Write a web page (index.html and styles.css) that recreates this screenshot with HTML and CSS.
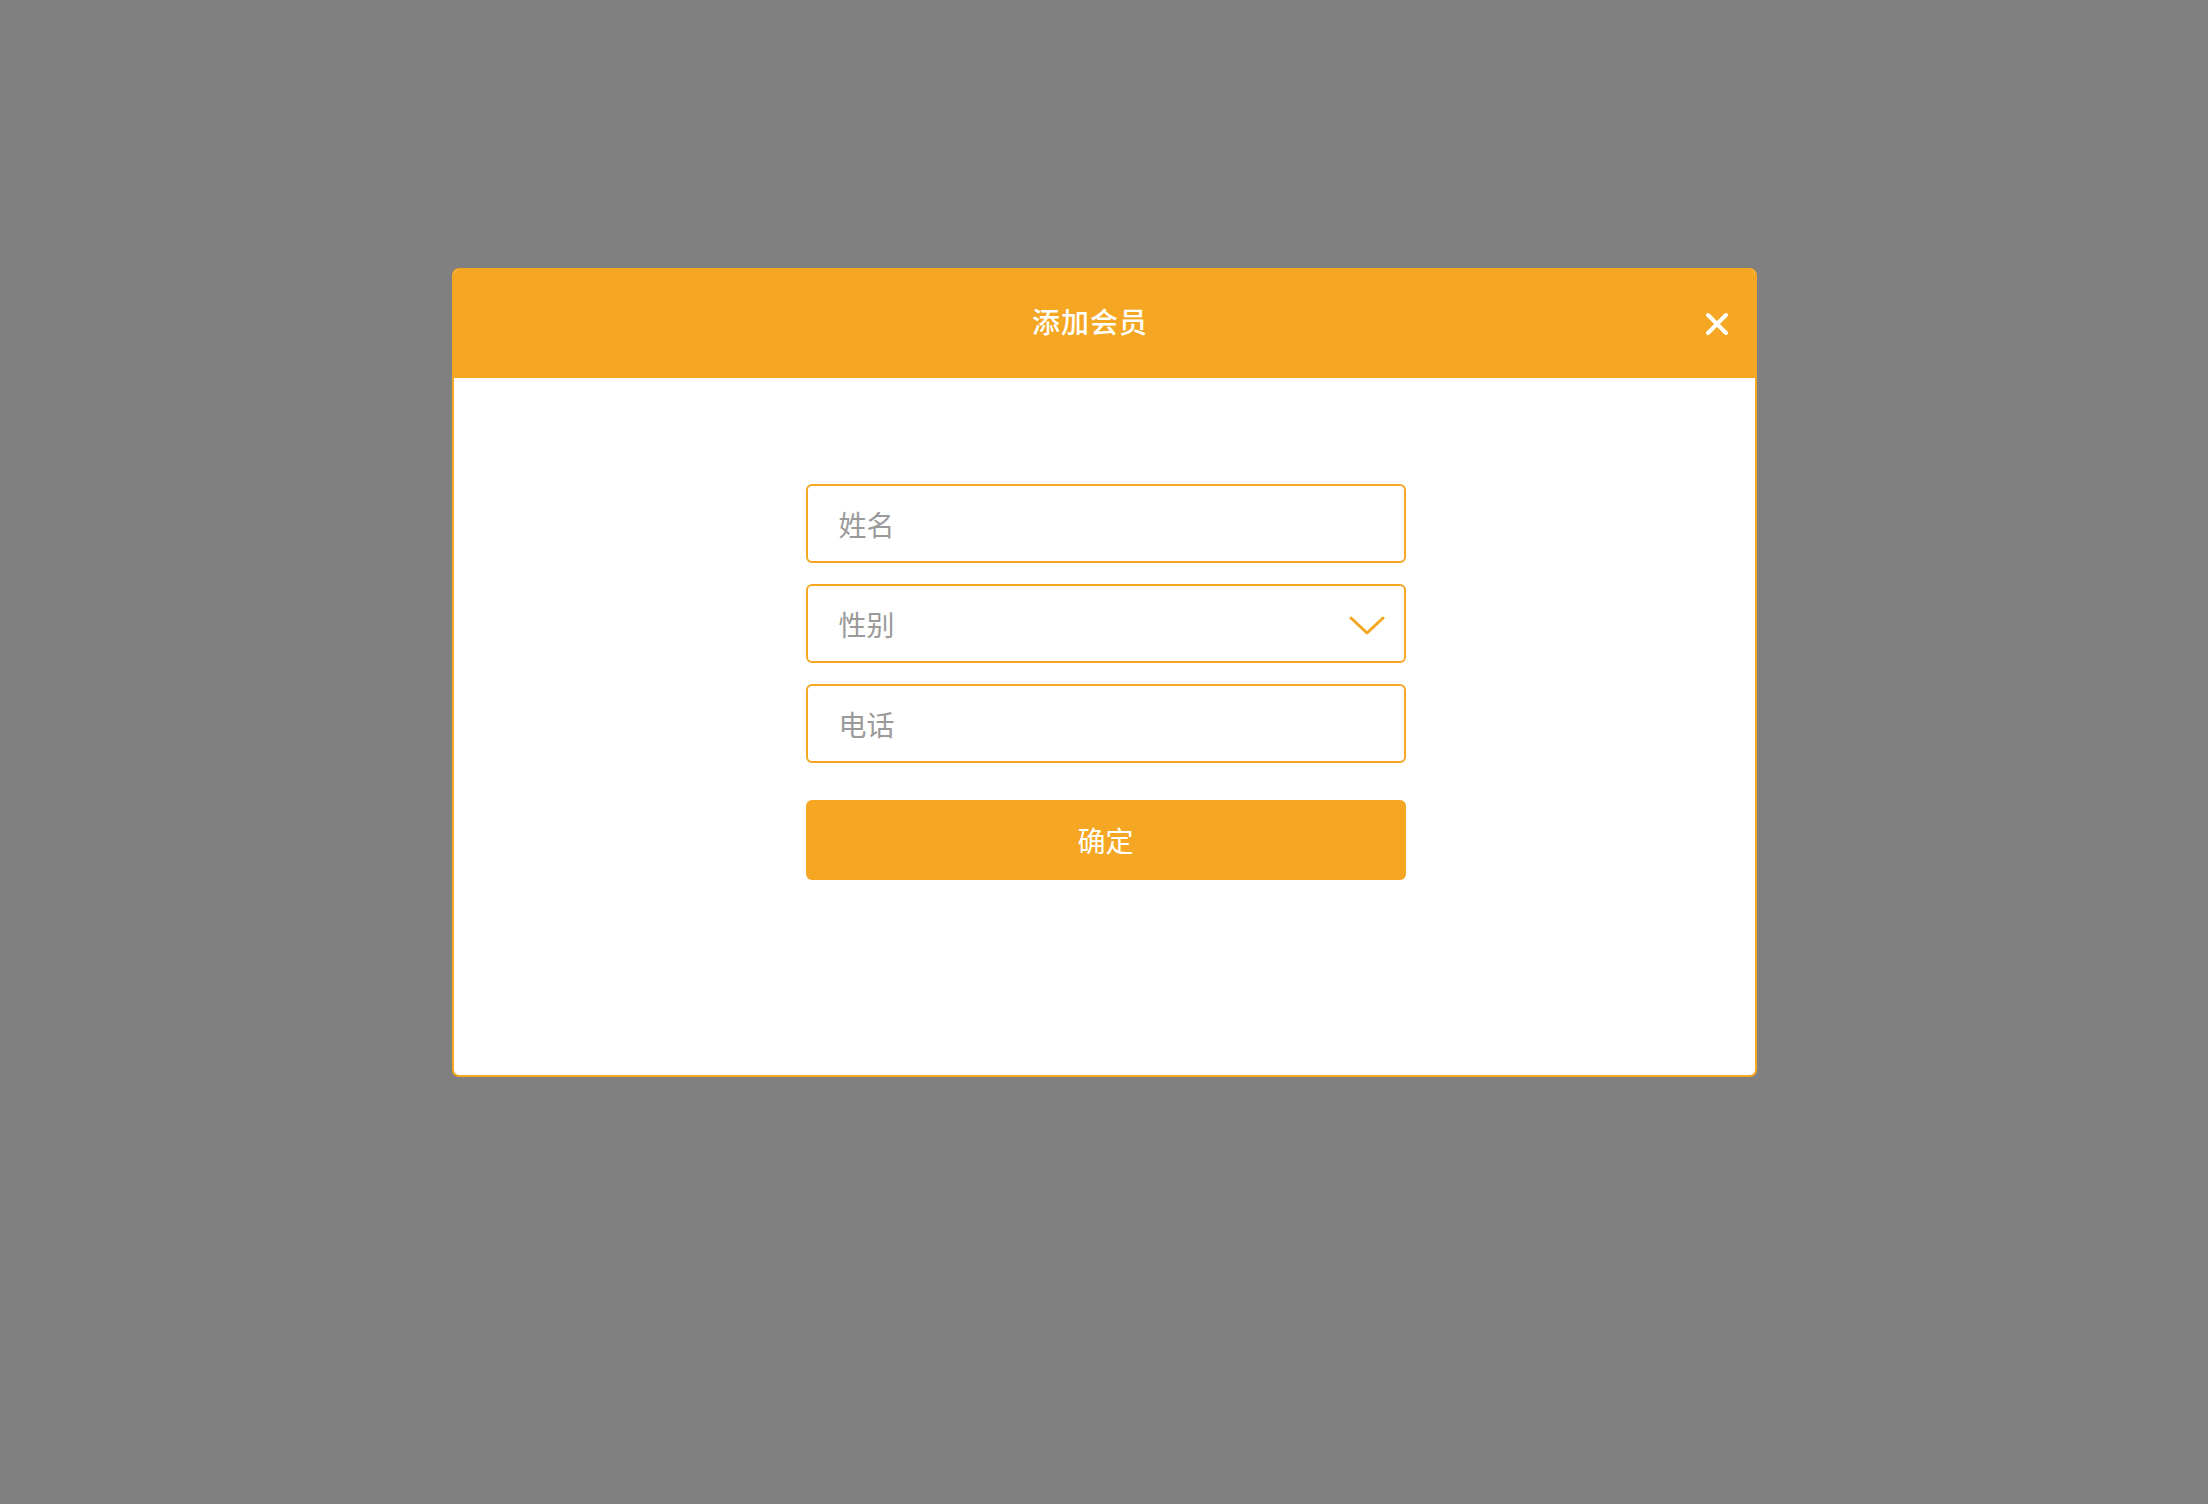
FILE: index.html
```html
<!DOCTYPE html>
<html lang="zh-CN">
<head>
    <meta charset="UTF-8">
    <meta name="viewport" content="width=device-width, initial-scale=1.0">
    <title>添加会员</title>
    <link rel="stylesheet" href="styles.css">
</head>
<body>
    <div class="modal">
        <div class="modal-header">
            <div class="modal-title">添加会员</div>
            <button type="button" class="modal-close" aria-label="关闭">
                <svg width="24" height="24" viewBox="0 0 24 24">
                    <path d="M3 3 L21 21 M21 3 L3 21" stroke="#fff" stroke-width="4" stroke-linecap="round" fill="none"/>
                </svg>
            </button>
        </div>
        <div class="modal-body">
            <form class="member-form">
                <input type="text" class="field" placeholder="姓名">
                <div class="field select-field">
                    <span class="placeholder">性别</span>
                    <svg class="chevron" width="36" height="20" viewBox="0 0 36 20">
                        <path d="M2 2 L18 17 L34 2" stroke="#f5a623" stroke-width="3" stroke-linecap="round" stroke-linejoin="round" fill="none"/>
                    </svg>
                </div>
                <input type="text" class="field" placeholder="电话">
                <button type="button" class="submit">确定</button>
            </form>
        </div>
    </div>
</body>
</html>
```

FILE: styles.css
```css
body {
    margin: 0;
    background-color: #808080;
    font-family: "Noto Sans CJK SC", "Noto Sans", sans-serif;
}

.modal {
    width: 1301px;
    margin: 268px auto 0;
    background-color: #fff;
    border: 2px solid #f5a623;
    border-radius: 7px;
    overflow: hidden;
}

.modal-header {
    position: relative;
    height: 110px;
    margin: -2px -2px 0;
    padding-right: 28px;
    padding-bottom: 4px;
    box-sizing: border-box;
    background-color: #f5a623;
    display: flex;
    align-items: center;
    justify-content: center;
}

.modal-title {
    color: #fff;
    font-size: 28px;
    font-weight: 500;
    letter-spacing: 1px;
}

.modal-close {
    position: absolute;
    right: 28px;
    top: 44px;
    padding: 0;
    border: none;
    background: none;
    cursor: pointer;
    line-height: 0;
}

.modal-body {
    padding: 106px 0 195px 3px;
}

.member-form {
    width: 600px;
    margin: 0 auto;
    display: flex;
    flex-direction: column;
    gap: 21px;
}

.field {
    box-sizing: border-box;
    width: 100%;
    height: 79px;
    margin: 0;
    padding: 0 31px;
    border: 2px solid #f5a623;
    border-radius: 6px;
    background: #fff;
    font-family: inherit;
    font-size: 28px;
    color: #333;
    outline: none;
}

.field::placeholder {
    color: #9a9a9a;
}

.select-field {
    display: flex;
    align-items: center;
    justify-content: space-between;
    padding-right: 19px;
}

.placeholder {
    color: #9a9a9a;
}

.chevron {
    margin-top: 5px;
}

.submit {
    height: 80px;
    margin-top: 16px;
    border: none;
    border-radius: 6px;
    background-color: #f5a623;
    color: #fff;
    font-family: inherit;
    font-size: 28px;
    cursor: pointer;
}
```
